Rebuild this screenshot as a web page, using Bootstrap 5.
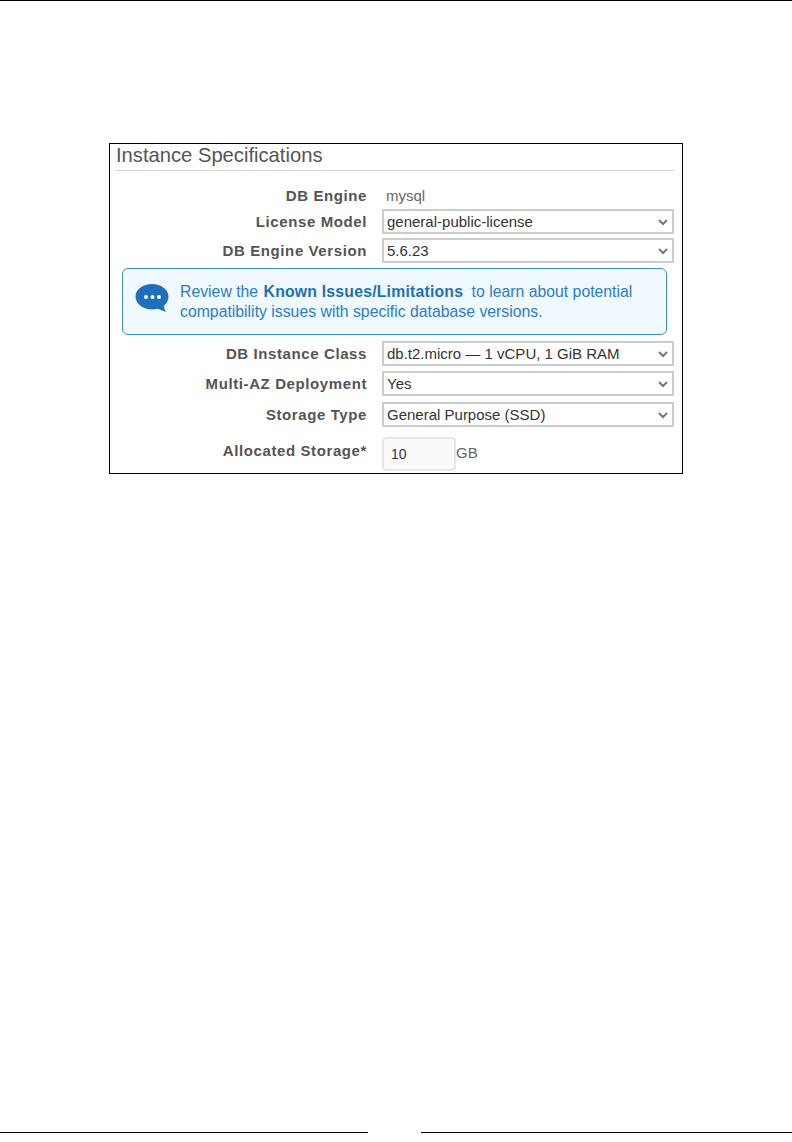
<!DOCTYPE html>
<html lang="en">
<head>
  <meta charset="UTF-8" />
  <meta name="viewport" content="width=device-width, initial-scale=1.0"/>
  <title>Instance Specifications</title>
  <link href="https://cdn.jsdelivr.net/npm/bootstrap@5.3.0/dist/css/bootstrap.min.css" rel="stylesheet"/>
  <script src="https://cdn.jsdelivr.net/npm/bootstrap@5.3.0/dist/js/bootstrap.bundle.min.js"></script>
  <style>
    body {
      font-family: "Liberation Sans", Arial, sans-serif;
      background: #fff;
      color: #444;
    }
    .page-sheet {
      height: 1142px;
      border-top: 1px solid #000;
    }
    .shot-frame {
      width: 574px;
      height: 331px;
      margin: 142px 0 0 109px;
      border: 1px solid #000;
      padding: 0 8px 0 5px;
    }
    .shot-title {
      font-size: 20.2px;
      line-height: 22px;
      padding: 0 0 4px 1px;
      margin: 0;
      color: #555;
      font-weight: 400;
      border-bottom: 1px solid #d5d5d5;
    }
    .spec-label {
      width: 252px;
      flex: none;
      margin: 0;
      text-align: right;
      font-size: 15px;
      font-weight: 700;
      letter-spacing: .6px;
      color: #545454;
    }
    label.spec-label {
      padding-top: 2px;
    }
    label.alloc-label {
      margin-top: 1px;
    }
    .spec-row {
      gap: 15px;
    }
    .row-engine {
      height: 22px;
      margin: 14px 0 2px;
    }
    .row-gap-4 { margin-bottom: 4px; }
    .row-gap-5 { margin-bottom: 5px; }
    .row-gap-6 { margin-bottom: 6px; }
    .row-gap-10 { margin-bottom: 10px; }
    .spec-value {
      font-size: 15px;
      color: #666;
      padding-left: 4px;
      line-height: 24px;
    }
    .spec-select {
      width: 292px;
      height: 25px;
      padding: 0 20px 0 3px;
      border: 2px solid #ccc;
      border-radius: 0;
      font-size: 15px;
      color: #333;
      background-image: url("data:image/svg+xml,%3csvg xmlns='http://www.w3.org/2000/svg' viewBox='0 0 10 8'%3e%3cpath fill='none' stroke='%23777' stroke-width='2' d='M1 2l4 4 4-4'/%3e%3c/svg%3e");
      background-position: right 4px center;
      background-size: 10px 8px;
      font-family: inherit;
    }
    .spec-note {
      width: 545px;
      height: 67px;
      margin: 5px 0 6px 7px;
      padding: 0 12px;
      gap: 11px;
      background: #f0f9fe;
      border: 1px solid #3d8fcb;
      border-radius: 6px;
      color: #2e7cc4;
      font-size: 15.8px;
      line-height: 20px;
    }
    .spec-note b {
      color: #1f6fb5;
      letter-spacing: .2px;
      margin: 0 4px 0 1px;
    }
    .note-icon {
      flex: none;
      margin-bottom: 8px;
    }
    .size-input {
      width: 74px;
      height: 34px;
      padding: 0 7px;
      border: 2px solid #e6e6e6;
      border-radius: 4px;
      font-size: 14px;
      color: #333;
      background: #fafafa;
    }
    .size-unit {
      font-size: 15px;
      color: #666;
      padding-bottom: 2px;
    }
    .foot-bar {
      margin-bottom: 9px;
    }
    .foot-rule {
      height: 1px;
      background: #000;
    }
    .foot-left { width: 368px; }
    .foot-right { width: 371px; }
  </style>
</head>
<body>
  <div class="page-sheet d-flex flex-column justify-content-between">
    <div class="shot-frame">
      <h2 class="shot-title">Instance Specifications</h2>

      <div class="spec-row row-engine d-flex align-items-center">
        <div class="spec-label">DB Engine</div>
        <div class="spec-value">mysql</div>
      </div>
      <div class="spec-row row-gap-4 d-flex align-items-center">
        <label class="spec-label">License Model</label>
        <select class="form-select spec-select"><option>general-public-license</option></select>
      </div>
      <div class="spec-row d-flex align-items-center">
        <label class="spec-label">DB Engine Version</label>
        <select class="form-select spec-select"><option>5.6.23</option></select>
      </div>

      <div class="spec-note d-flex align-items-center">
        <svg width="34" height="30" viewBox="0 0 34 30" class="note-icon">
          <path fill="#1f6fbd" d="M17 1C8 1 .5 6.500 .5 13.500c0 7 7.500 13 16.500 13 2 0 4-.3 5.800-.8L31 29c-1-1.500-2-4-2-6.500 3-2.300 4.500-5.400 4.500-9C33.500 6.500 26 1 17 1z"/>
          <circle cx="11" cy="14" r="2" fill="#fff"/>
          <circle cx="17.500" cy="14" r="2" fill="#fff"/>
          <circle cx="24" cy="14" r="2" fill="#fff"/>
        </svg>
        <div>Review the <b>Known Issues/Limitations</b> to learn about potential<br>compatibility issues with specific database versions.</div>
      </div>

      <div class="spec-row row-gap-5 d-flex align-items-center">
        <label class="spec-label">DB Instance Class</label>
        <select class="form-select spec-select"><option>db.t2.micro — 1 vCPU, 1 GiB RAM</option></select>
      </div>
      <div class="spec-row row-gap-6 d-flex align-items-center">
        <label class="spec-label">Multi-AZ Deployment</label>
        <select class="form-select spec-select"><option>Yes</option></select>
      </div>
      <div class="spec-row row-gap-10 d-flex align-items-center">
        <label class="spec-label">Storage Type</label>
        <select class="form-select spec-select"><option>General Purpose (SSD)</option></select>
      </div>
      <div class="spec-row d-flex align-items-start">
        <label class="spec-label alloc-label">Allocated Storage*</label>
        <div class="d-flex align-items-center">
          <input class="size-input" type="text" value="10">
          <span class="size-unit">GB</span>
        </div>
      </div>
    </div>

    <div class="foot-bar d-flex justify-content-between">
      <div class="foot-rule foot-left"></div>
      <div class="foot-rule foot-right"></div>
    </div>
  </div>
</body>
</html>
